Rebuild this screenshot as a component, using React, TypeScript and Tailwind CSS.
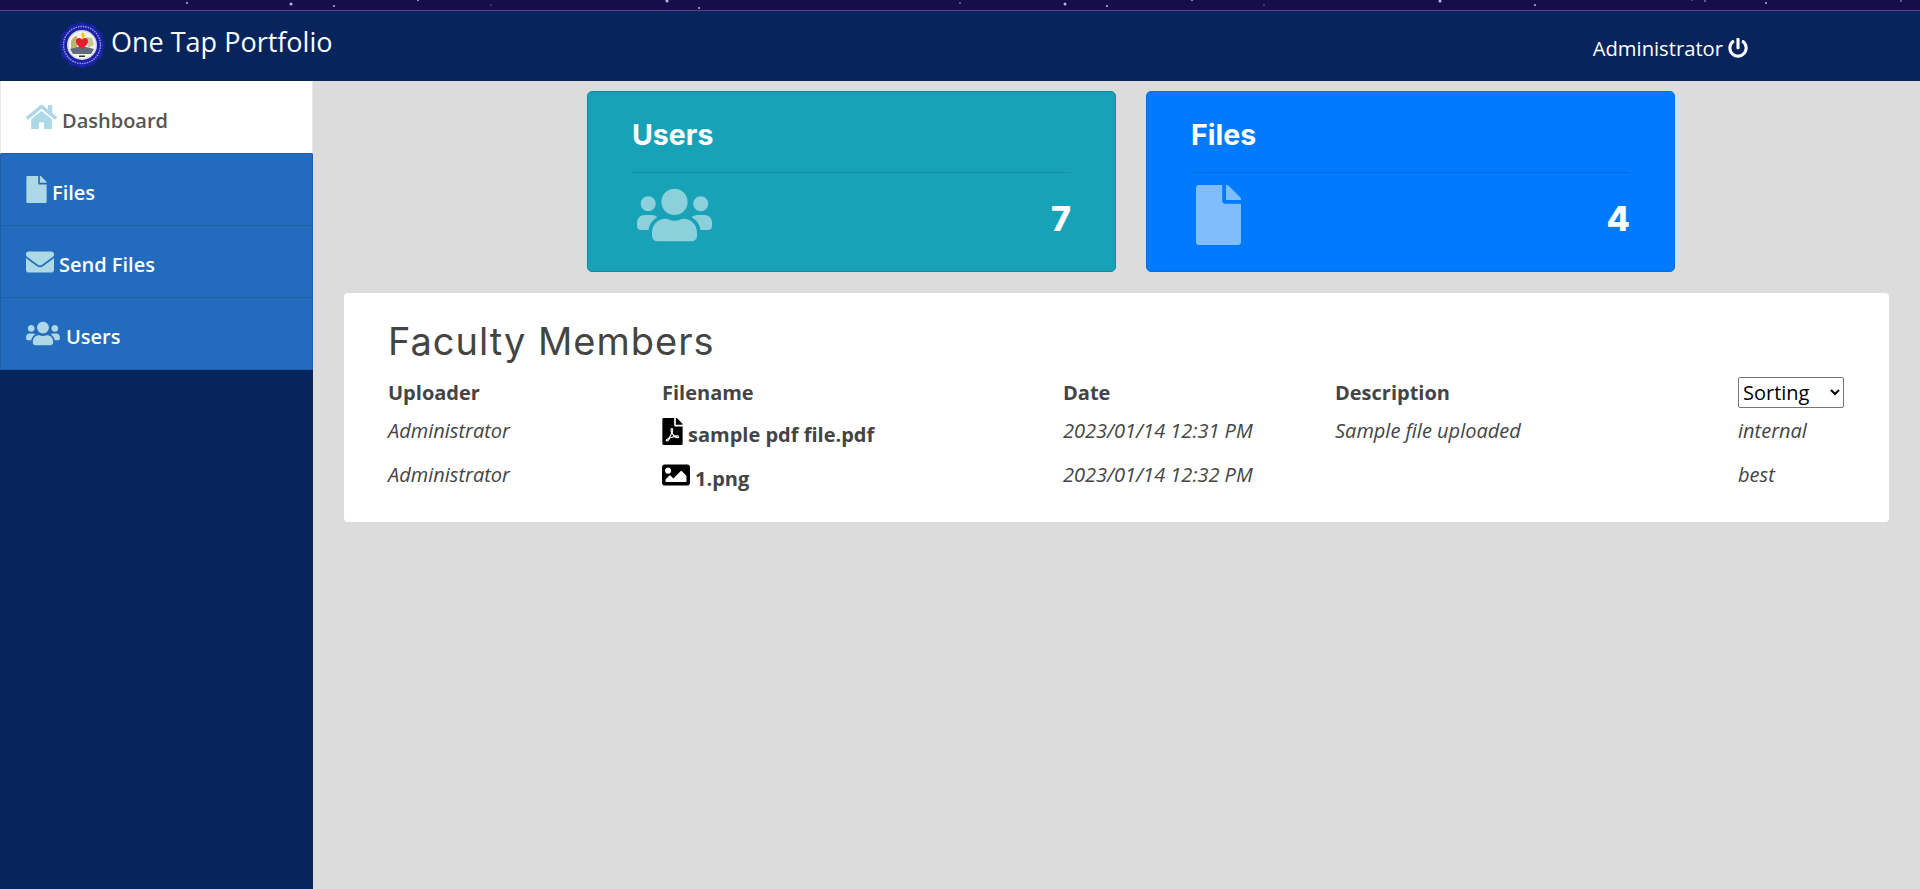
import React from 'react';
import { FaHome, FaFile, FaEnvelope, FaUsers, FaFilePdf, FaImage, FaPowerOff } from 'react-icons/fa';

const stars = [
  [187, 3, 1], [291, 4, 1.5], [334, 6, 1], [418, 0, 1], [491, 5, 0.6], [667, 1, 1.5], [699, 8, 1],
  [960, 3, 0.8], [1065, 4, 1.5], [1107, 6, 1], [1192, 0, 1], [1264, 5, 0.6], [1440, 1, 1.5], [1535, 5, 1],
  [1692, 0, 0.7], [1705, 1, 0.8], [1766, 3, 1], [1901, 1, 0.8],
];

const navItems = [
  { name: 'Dashboard', icon: FaHome, iconSize: 'w-[31px] h-[28px]', gap: 'ml-[5px]', h: 'h-[73px]', active: true },
  { name: 'Files', icon: FaFile, iconSize: 'w-[21px] h-[27px]', gap: 'ml-[5px]', h: 'h-[72px]' },
  { name: 'Send Files', icon: FaEnvelope, iconSize: 'w-[28px] h-[28px]', gap: 'ml-[5px]', h: 'h-[72px]' },
  { name: 'Users', icon: FaUsers, iconSize: 'w-[34px] h-[27px]', gap: 'ml-[6px]', h: 'h-[72px]' },
];

const rows = [
  { uploader: 'Administrator', icon: FaFilePdf, file: 'sample pdf file.pdf', date: '2023/01/14 12:31 PM', desc: 'Sample file uploaded', tag: 'internal', iconSize: 'w-[21px] h-[27px]', gap: 'mr-[5px]', h: 'h-[40px]' },
  { uploader: 'Administrator', icon: FaImage, file: '1.png', date: '2023/01/14 12:32 PM', desc: '', tag: 'best', iconSize: 'w-[28px] h-[28px]', gap: 'mr-[5px]', h: 'h-[48px]' },
];

// scalloped edge of the seal
const sealEdge = Array.from({ length: 48 }, (_, i) => {
  const a = (i / 48) * Math.PI * 2;
  const r = i % 4 === 0 ? 23 : i % 2 === 0 ? 21.2 : 22.4;
  return `${(23 + r * Math.cos(a)).toFixed(1)},${(23 + r * Math.sin(a)).toFixed(1)}`;
}).join(' ');

function Seal() {
  return (
    <svg width="46" height="46" viewBox="0 0 46 46" className="shrink-0">
      <polygon points={sealEdge} fill="#1c22a8" />
      <circle cx="23" cy="23" r="18.5" fill="none" stroke="#9aa0dc" strokeWidth="1.4" strokeDasharray="1.5 1" />
      <circle cx="23" cy="23" r="15" fill="#d6d8ee" />
      <circle cx="23" cy="23" r="13.5" fill="#f6f4ea" />
      <path d="M12 19c1-3 4-5 6-5v12l-6 1z" fill="#b9b66c" />
      <path d="M27 15l6 1 2 7-6 3z" fill="#c9c39a" />
      <path d="M11 27l12-3 12 3-3 5H14z" fill="#5f6b78" />
      <path d="M23 17l-1-5 2-2 1 2 1 2z" fill="#f5c518" />
      <path d="M23 27c-8-5-7-11-3-11 2 0 3 1 3 2 0-1 1-2 3-2 4 0 5 6-3 11z" fill="#e5202e" />
      <rect x="20" y="33.5" width="6" height="1.5" fill="#333" />
    </svg>
  );
}

function StatCard({ title, value, color, line, icon }: { title: string; value: string; color: string; line: string; icon: React.ReactNode }) {
  return (
    <div className={`w-[529px] h-[181px] rounded-[5px] border pl-[44px] pr-[44px] pt-[23px] ${color}`}>
      <h3 className="font-bold text-[28.5px] leading-[40px] text-white" style={{ fontFamily: 'Inter, sans-serif' }}>{title}</h3>
      <div className={`mt-[17px] border-t ${line}`} />
      <div className="flex items-center justify-between h-[74px] mt-[2px]">
        {icon}
        <span className="font-extrabold text-[34px] leading-none text-white mt-[14px]" style={{ fontFamily: 'Inter, sans-serif' }}>{value}</span>
      </div>
    </div>
  );
}

export default function App() {
  return (
    <div className="h-[889px] w-full flex flex-col overflow-hidden bg-[#dcdcdc] text-[#444]" style={{ fontFamily: '"Open Sans", sans-serif' }}>
      <svg className="block h-[11px] w-full shrink-0" width="1920" height="11">
        <rect width="1920" height="10" fill="#170d4a" />
        <rect y="10" width="1920" height="1" fill="#57488c" />
        {stars.map(([x, y, r], i) => <circle key={i} cx={x} cy={y} r={r} fill="#b9b6dc" />)}
      </svg>

      <header className="h-[70px] shrink-0 bg-[#08245c] flex items-center justify-between pl-[59px] pr-[172px]">
        <div className="flex items-center gap-[6px] -mt-[2px]">
          <Seal />
          <span className="text-[27px] leading-none text-white -mt-[7px]">One Tap Portfolio</span>
        </div>
        <div className="flex items-center gap-[5px] text-white text-[20.2px] mt-[5px]">
          <span>Administrator</span>
          <FaPowerOff className="text-[20px]" />
        </div>
      </header>

      <div className="flex flex-1 min-h-0">
        <aside className="w-[313px] shrink-0 bg-[#08245c]">
          {navItems.map(item => (
            <div
              key={item.name}
              className={`${item.h} flex items-center pl-[25px] border-x border-b font-semibold ${
                item.active ? 'bg-white border-[#e8e8e8] border-b-[#1f5fa8] text-[#555]' : 'bg-[#226bbd] border-[#1f5fa8] text-white'
              }`}
            >
              <item.icon className={`${item.iconSize} text-[#add8e6]`} />
              <span className={`${item.gap} text-[20px] mt-[7px]`}>{item.name}</span>
            </div>
          ))}
        </aside>

        <main className="flex-1 min-w-0 pt-[10px]">
          <div className="flex gap-[30px] pl-[274px]">
            <StatCard
              title="Users"
              value="7"
              color="bg-[#17a2b8] border-[#148a9d]"
              line="border-[#1390a4]"
              icon={<FaUsers className="w-[75px] h-[60px] ml-[5px] mt-[6px] text-[#8bd0db]" />}
            />
            <StatCard
              title="Files"
              value="4"
              color="bg-[#007bff] border-[#006fe6]"
              line="border-[#0069d9]"
              icon={<FaFile className="w-[45px] h-[60px] ml-[5px] mt-[6px] text-[#80bdff]" />}
            />
          </div>

          <section className="ml-[31px] mt-[21px] w-[1545px] h-[229px] rounded-[4px] bg-white pl-[44px] pr-[45px] pt-[25px]">
            <h2 className="text-[38px] leading-[46px] font-normal tracking-[1px] text-[#444]" style={{ fontFamily: 'Inter, sans-serif' }}>Faculty Members</h2>
            <div className="grid grid-cols-[274px_401px_272px_403px_1fr] items-center h-[37px] mt-[10px] text-[20px] font-bold">
              <div>Uploader</div>
              <div>Filename</div>
              <div>Date</div>
              <div>Description</div>
              <select defaultValue="Sorting" className="w-[106px] h-[31px] border border-[#767676] rounded-[2px] bg-white text-[20px] font-normal text-black">
                <option>Sorting</option>
              </select>
            </div>
            {rows.map(row => (
              <div key={row.file} className={`grid grid-cols-[274px_401px_272px_403px_1fr] items-center text-[20px] italic ${row.h}`}>
                <div>{row.uploader}</div>
                <div className="flex items-center not-italic font-bold text-[20px]">
                  <row.icon className={`${row.iconSize} ${row.gap} text-black`} />
                  <span className="mt-[8px]">{row.file}</span>
                </div>
                <div>{row.date}</div>
                <div>{row.desc}</div>
                <div>{row.tag}</div>
              </div>
            ))}
          </section>
        </main>
      </div>
    </div>
  );
}
